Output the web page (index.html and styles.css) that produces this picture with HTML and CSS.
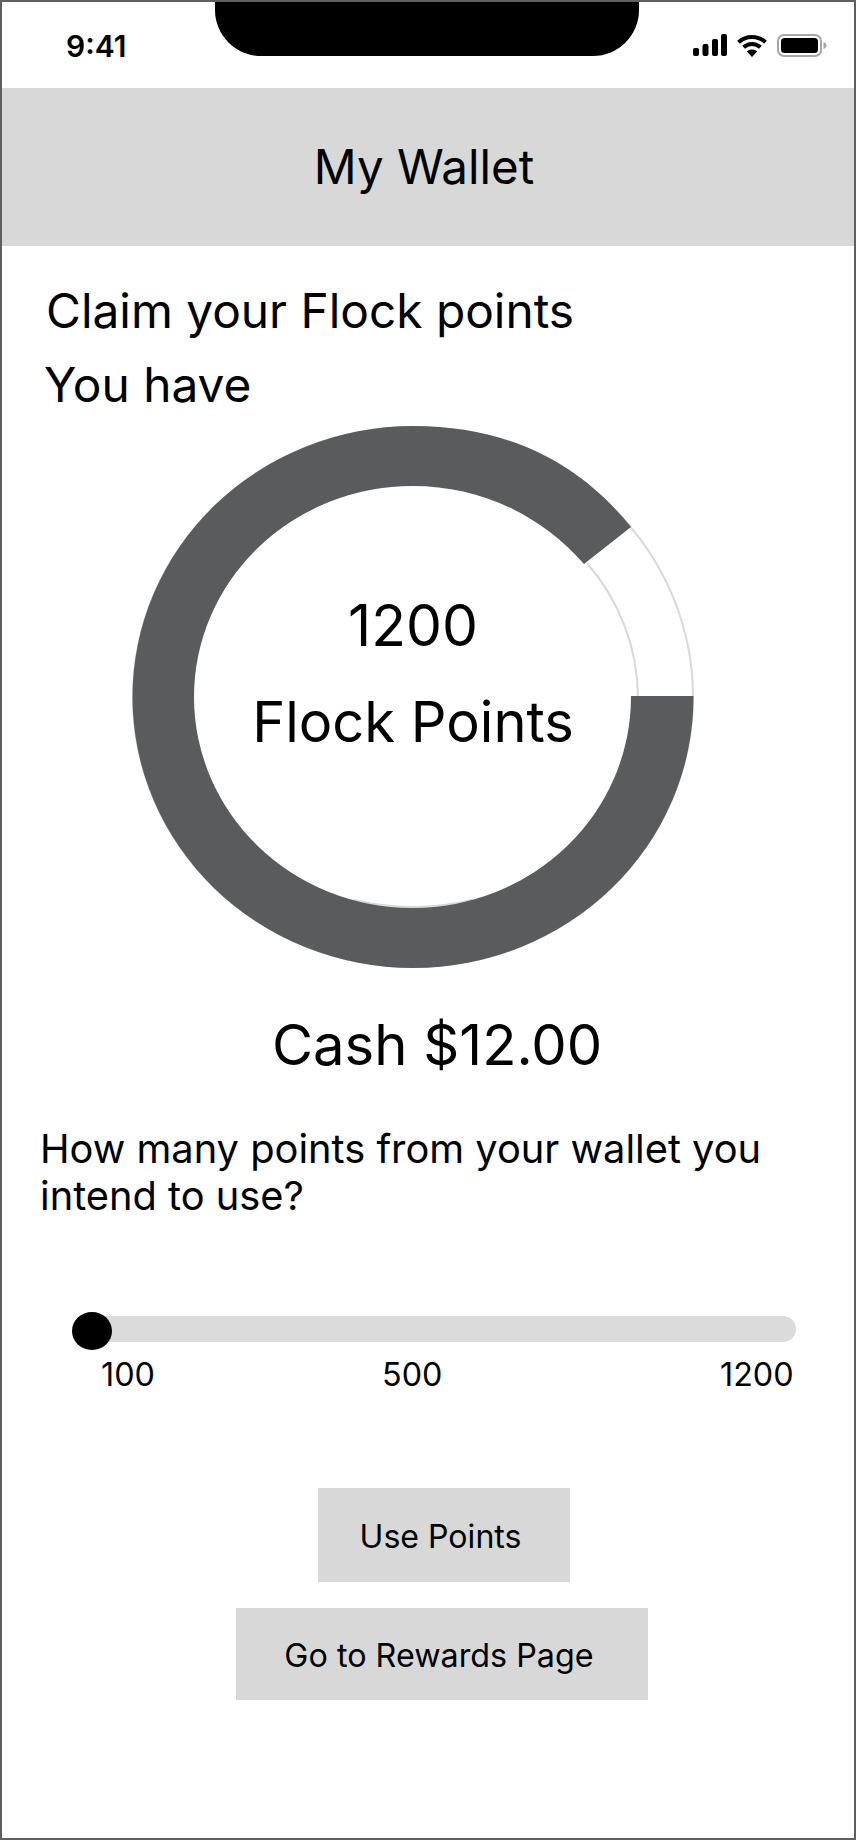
FILE: index.html
```html
<!DOCTYPE html>
<html lang="en">
<head>
	<meta charset="UTF-8">
	<title>My Wallet</title>
	<link rel="stylesheet" href="styles.css">
</head>
<body>
	<div class="phone">
		<div class="status_bar">
			<span class="status_time">9:41</span>
			<div class="notch"></div>
			<div class="status_icons">
				<svg class="icon_signal" width="34" height="22" viewBox="0 0 34 22">
					<rect x="0" y="14" width="6" height="8" rx="2"/>
					<rect x="9.5" y="10" width="6" height="12" rx="2"/>
					<rect x="19" y="5" width="6" height="17" rx="2"/>
					<rect x="28" y="0" width="6" height="22" rx="2"/>
				</svg>
				<svg class="icon_wifi" width="30" height="23" viewBox="0 0 30 23">
					<path d="M1.5 8.2 C9 1.2 21 1.2 28.500 8.2" fill="none" stroke="#000" stroke-width="4"/>
					<path d="M6.600 13.200 C11.500 8.800 18.500 8.800 23.400 13.200" fill="none" stroke="#000" stroke-width="4"/>
					<path d="M15 23 L9.800 17.400 C12.800 14.800 17.200 14.800 20.200 17.400 Z"/>
				</svg>
				<svg class="icon_battery" width="50" height="23" viewBox="0 0 50 23">
					<rect x="1" y="1" width="43" height="21" rx="6" fill="none" stroke="#a6a6a6" stroke-width="2"/>
					<rect x="4" y="4" width="37" height="15" rx="3.500"/>
					<path d="M46.500 8 C48.500 8.800 49.500 10 49.500 11.500 C49.500 13 48.500 14.200 46.500 15 Z" fill="#a6a6a6"/>
				</svg>
			</div>
		</div>

		<div class="title_bar">My Wallet</div>

		<div class="claim_head">
			<p class="claim_line">Claim your Flock points</p>
			<p class="have_line">You have</p>
		</div>

		<div class="ring">
			<svg class="ring_svg" width="566" height="546" viewBox="0 0 566 546">
				<!-- thin track under the arc -->
				<ellipse class="ring_track" cx="281" cy="271" rx="280" ry="270"/>
				<path class="ring_track" d="M455 137 A219.500 212 0 0 1 506 271"/>
				<path class="ring_track" d="M222 474 Q281 488 340 474"/>
				<path class="ring_arc" d="M561.500 270 A280.500 271 0 0 1 281 542 A280.500 271 0 0 1 0.500 271 A280.500 271 0 0 1 281 0 C 380 0 450 40 499 101 L 452 138 C 410 90 350 60 280.500 60 A218.500 211 0 0 0 62 271 A218.500 211 0 0 0 280.500 482 A218.500 211 0 0 0 499 270 Z"/>
			</svg>
			<div class="ring_text">
				<div class="ring_num">1200</div>
				<div class="ring_label">Flock Points</div>
			</div>
		</div>

		<div class="cash">Cash $12.00</div>

		<p class="question">How many points from your wallet you<br>intend to use?</p>

		<div class="slider">
			<div class="slider_track">
				<span class="slider_thumb"></span>
			</div>
			<div class="slider_labels">
				<span>100</span>
				<span>500</span>
				<span>1200</span>
			</div>
		</div>

		<div class="actions">
			<a class="btn btn_use" href="#">Use Points</a>
			<a class="btn btn_rewards" href="#">Go to Rewards Page</a>
		</div>
	</div>
</body>
</html>
```

FILE: styles.css
```css
body,div,p{margin:0;padding:0}
a{
	text-decoration: none;
	color: #000;
}

body{
	background-color: #fff;
	font-family: Inter, "Liberation Sans", sans-serif;
	color: #000;
}

.phone{
	width: 856px;
	height: 1840px;
	box-sizing: border-box;
	border: 2px solid #5f5f5f;
	overflow: hidden;
}

/* status bar */
.status_bar{
	height: 86px;
	display: flex;
	align-items: flex-start;
}
.status_time{
	width: 213px;
	padding-left: 64px;
	box-sizing: border-box;
	margin-top: 26px;
	font-size: 30px;
	line-height: 36px;
	font-weight: 600;
}
.notch{
	width: 424px;
	height: 54px;
	background-color: #000;
	border-radius: 0 0 46px 46px;
}
.status_icons{
	display: flex;
	align-items: flex-start;
	margin-top: 32px;
	margin-left: 54px;
	gap: 10px;
}

.title_bar{
	height: 158px;
	box-sizing: border-box;
	padding: 0 8px 2px 0;
	background-color: #d8d8d8;
	display: flex;
	align-items: center;
	justify-content: center;
	font-size: 47.5px;
}

.claim_head{
	padding: 28px 0 0 44px;
	font-size: 47.800px;
	line-height: 74px;
}
.have_line{
	margin-left: -2px;
}

/* donut */
.ring{
	width: 566px;
	height: 546px;
	margin: 4px 0 0 130px;
	position: relative;
}
.ring_svg{
	display: block;
}
.ring_track{
	fill: none;
	stroke: #d9d9d9;
	stroke-width: 2;
}
.ring_arc{
	fill: #595b5c;
}
.ring_text{
	position: absolute;
	left: 0;
	top: 0;
	width: 562px;
	padding-top: 152px;
	text-align: center;
	line-height: 96px;
}
.ring_num{
	font-size: 57px;
}
.ring_label{
	font-size: 56px;
}

.cash{
	margin-top: 39px;
	padding-left: 270px;
	font-size: 56.200px;
	line-height: 68px;
}

.question{
	margin-top: 46px;
	padding-left: 38px;
	font-size: 39.800px;
	line-height: 47px;
}

/* slider */
.slider{
	margin-top: 97px;
	padding-left: 70px;
}
.slider_track{
	width: 724px;
	height: 26px;
	background-color: #dbdbdb;
	border-radius: 13px;
	position: relative;
}
.slider_thumb{
	position: absolute;
	left: 0;
	top: -4px;
	width: 40px;
	height: 38px;
	border-radius: 50%;
	background-color: #000;
}
.slider_labels{
	display: grid;
	grid-template-columns: 281px 338px auto;
	margin-top: 13px;
	padding-left: 29px;
	font-size: 32.300px;
	line-height: 40px;
}

/* buttons */
.actions{
	margin-top: 93px;
	display: flex;
	flex-direction: column;
	align-items: center;
	gap: 26px;
	padding-left: 32px;
}
.btn{
	background-color: #d8d8d8;
	display: flex;
	align-items: center;
	justify-content: center;
	box-sizing: border-box;
	font-size: 32.100px;
}
.btn_use{
	width: 252px;
	height: 94px;
	padding: 2px 7px 0 0;
}
.btn_rewards{
	width: 412px;
	height: 92px;
	margin-right: 4px;
	padding: 3px 6px 0 0;
	font-size: 32.300px;
}
```
